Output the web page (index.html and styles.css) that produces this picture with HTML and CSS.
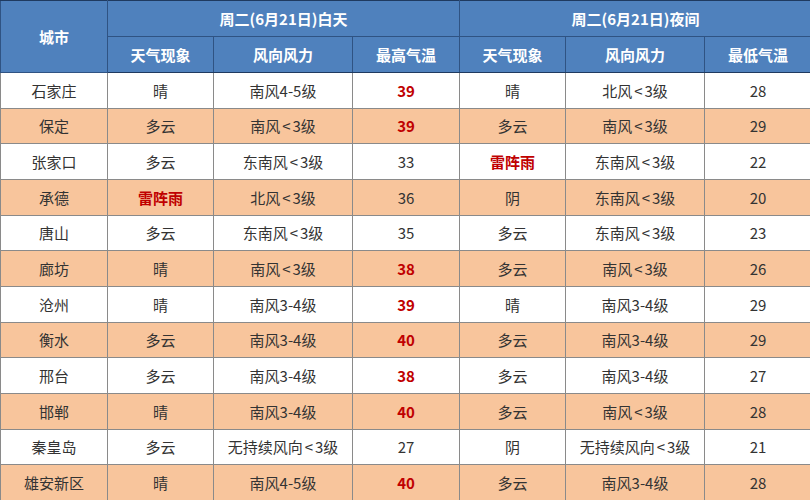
FILE: index.html
```html
<!DOCTYPE html>
<html lang="zh-CN">
<head>
<meta charset="utf-8">
<title>河北天气</title>
<link rel="stylesheet" href="styles.css">
</head>
<body>
<table class="wx">
  <colgroup>
    <col class="c-city"><col class="c-a"><col class="c-b"><col class="c-c"><col class="c-a"><col class="c-b"><col class="c-c">
  </colgroup>
  <thead>
    <tr class="h1">
      <th rowspan="2">城市</th>
      <th colspan="3">周二(6月21日)白天</th>
      <th colspan="3">周二(6月21日)夜间</th>
    </tr>
    <tr class="h2">
      <th>天气现象</th><th>风向风力</th><th>最高气温</th>
      <th>天气现象</th><th>风向风力</th><th>最低气温</th>
    </tr>
  </thead>
  <tbody>
    <tr><td>石家庄</td><td>晴</td><td>南风4-5级</td><td class="hot">39</td><td>晴</td><td>北风<span class="lt">&lt;</span>3级</td><td>28</td></tr>
    <tr class="alt"><td>保定</td><td>多云</td><td>南风<span class="lt">&lt;</span>3级</td><td class="hot">39</td><td>多云</td><td>南风<span class="lt">&lt;</span>3级</td><td>29</td></tr>
    <tr><td>张家口</td><td>多云</td><td>东南风<span class="lt">&lt;</span>3级</td><td>33</td><td class="hot">雷阵雨</td><td>东南风<span class="lt">&lt;</span>3级</td><td>22</td></tr>
    <tr class="alt"><td>承德</td><td class="hot">雷阵雨</td><td>北风<span class="lt">&lt;</span>3级</td><td>36</td><td>阴</td><td>东南风<span class="lt">&lt;</span>3级</td><td>20</td></tr>
    <tr><td>唐山</td><td>多云</td><td>东南风<span class="lt">&lt;</span>3级</td><td>35</td><td>多云</td><td>东南风<span class="lt">&lt;</span>3级</td><td>23</td></tr>
    <tr class="alt"><td>廊坊</td><td>晴</td><td>南风<span class="lt">&lt;</span>3级</td><td class="hot">38</td><td>多云</td><td>南风<span class="lt">&lt;</span>3级</td><td>26</td></tr>
    <tr><td>沧州</td><td>晴</td><td>南风3-4级</td><td class="hot">39</td><td>晴</td><td>南风3-4级</td><td>29</td></tr>
    <tr class="alt"><td>衡水</td><td>多云</td><td>南风3-4级</td><td class="hot">40</td><td>多云</td><td>南风3-4级</td><td>29</td></tr>
    <tr><td>邢台</td><td>多云</td><td>南风3-4级</td><td class="hot">38</td><td>多云</td><td>南风3-4级</td><td>27</td></tr>
    <tr class="alt"><td>邯郸</td><td>晴</td><td>南风3-4级</td><td class="hot">40</td><td>多云</td><td>南风<span class="lt">&lt;</span>3级</td><td>28</td></tr>
    <tr><td>秦皇岛</td><td>多云</td><td>无持续风向<span class="lt">&lt;</span>3级</td><td>27</td><td>阴</td><td>无持续风向<span class="lt">&lt;</span>3级</td><td>21</td></tr>
    <tr class="alt"><td>雄安新区</td><td>晴</td><td>南风4-5级</td><td class="hot">40</td><td>多云</td><td>南风3-4级</td><td>28</td></tr>
  </tbody>
</table>
</body>
</html>
```
FILE: styles.css
```css
html, body {
  margin: 0;
  padding: 0;
  background: #ffffff;
}
body {
  width: 810px;
  height: 500px;
  overflow: hidden;
  font-family: "Noto Sans CJK SC", "Noto Sans", sans-serif;
}
.wx {
  width: 810px;
  height: 501px;
  border-collapse: collapse;
  table-layout: fixed;
  font-size: 15px;
  color: #333333;
}
.c-city { width: 107px; }
.c-a { width: 106px; }
.c-b { width: 139px; }
.c-c { width: 107px; }
.wx th {
  background: #4f81bd;
  color: #ffffff;
  font-weight: bold;
  border: 1px solid #2f5383;
  height: 35px;
  padding: 0;
  text-align: center;
  vertical-align: middle;
  line-height: 1;
}
.wx thead tr.h2 th {
  border-bottom: 1px solid #1f3a60;
}
.wx thead tr.h1 th {
  border-top: 1px solid #1f3a60;
}
.wx td {
  border: 1px solid #8a8a8a;
  height: 34.6px;
  padding: 0;
  text-align: center;
  vertical-align: middle;
  line-height: 1;
  background: #ffffff;
}
.wx tr.alt td {
  background: #f8c59c;
}
.wx td.hot {
  color: #c00000;
  font-weight: bold;
}
.lt {
  margin: 0 2px;
}
```
